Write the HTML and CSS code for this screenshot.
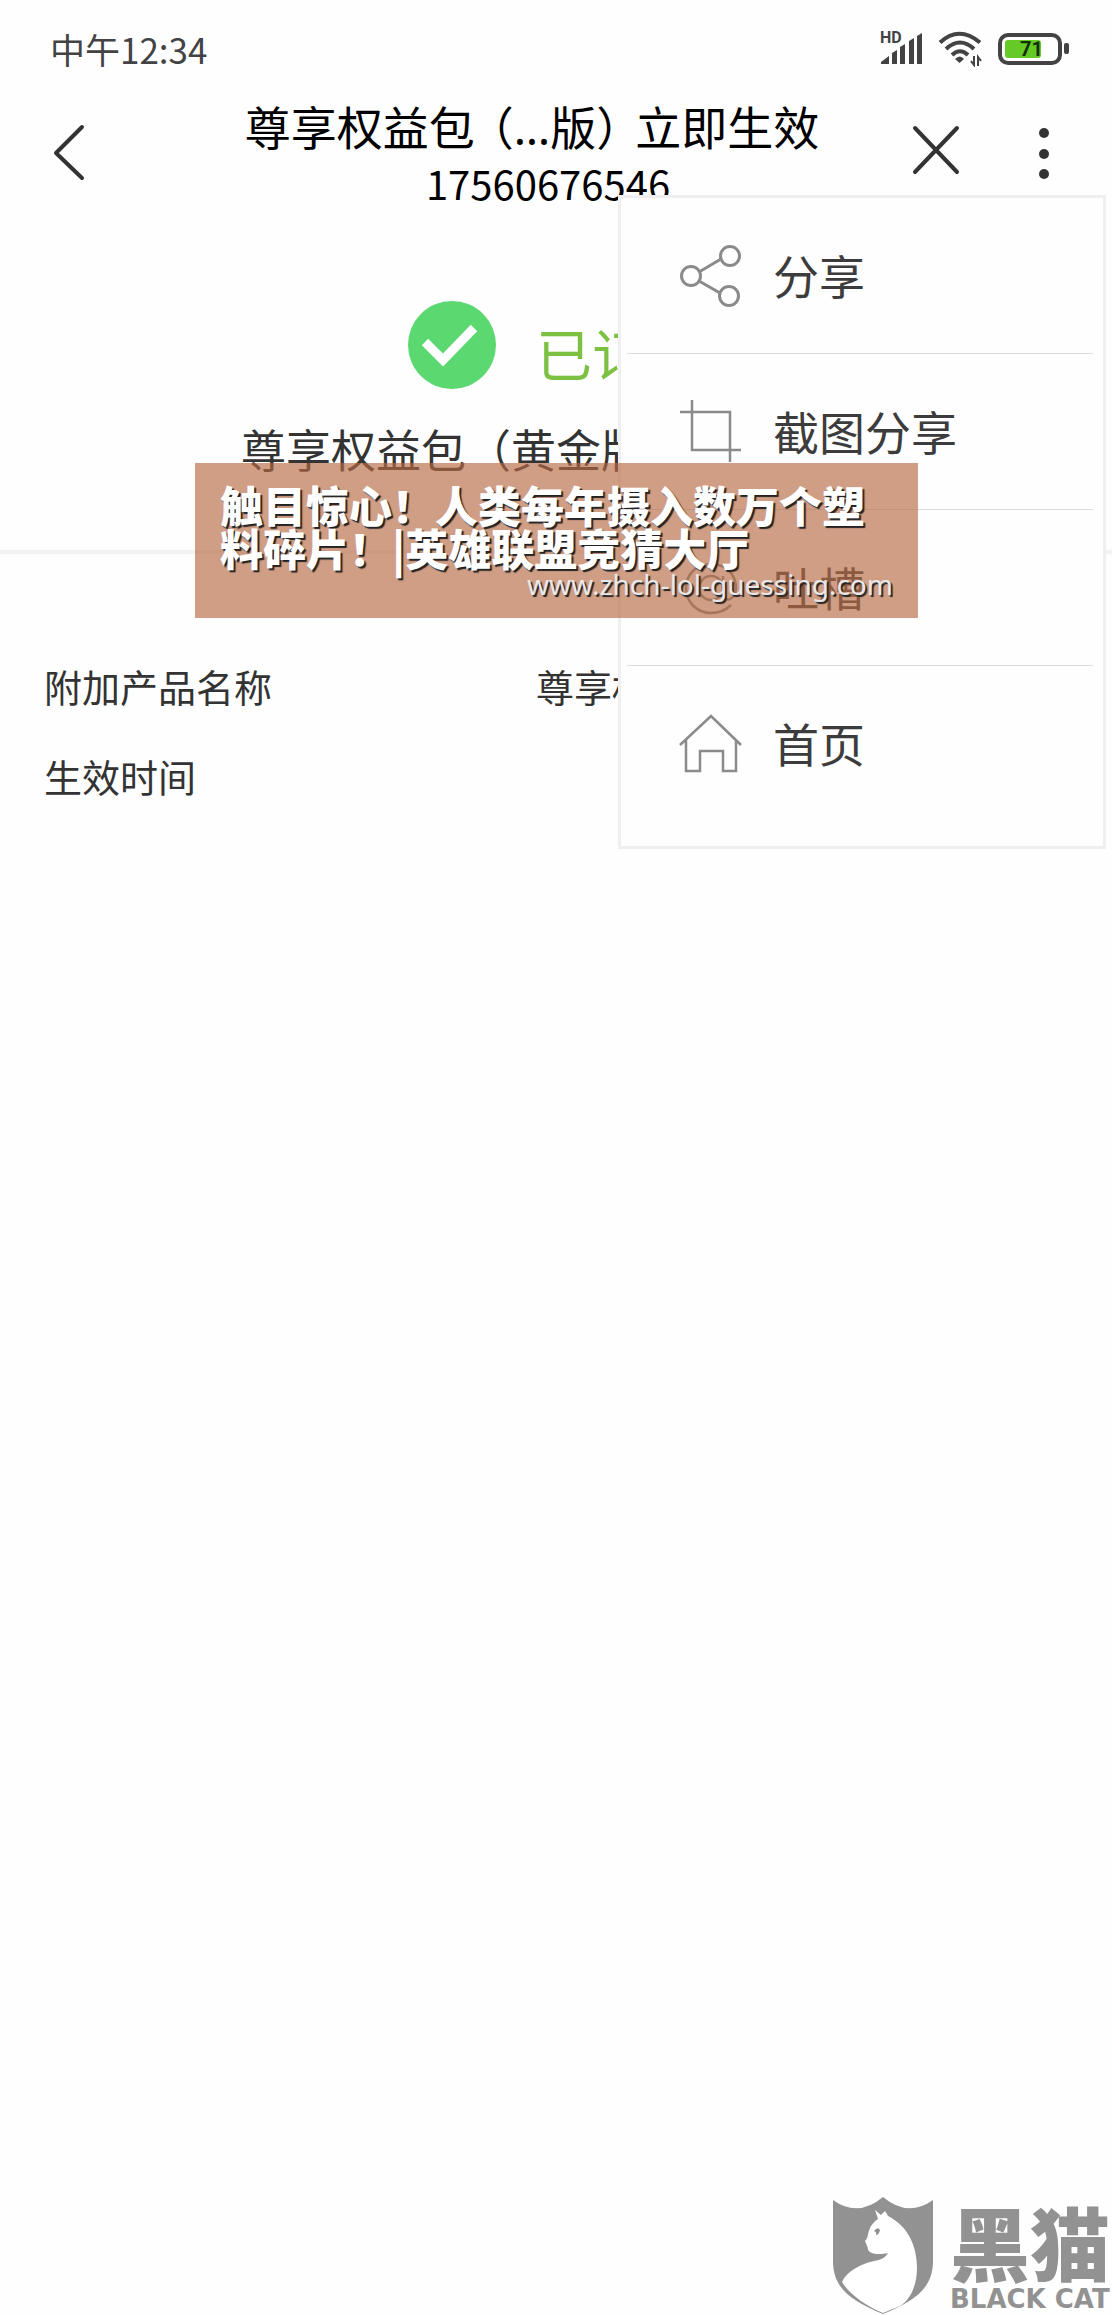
FILE: index.html
```html
<!DOCTYPE html>
<html lang="zh-CN">
<head>
  <meta charset="UTF-8">
  <meta name="viewport" content="width=device-width, initial-scale=1">
  <title>尊享权益包</title>
  <link rel="stylesheet" href="styles.css">
</head>
<body>
  <div class="status-bar">
    <span class="clock">中午12:34</span>
    <div class="status-icons">
      <div class="signal">
        <span class="hd">HD</span>
        <svg width="44" height="32" viewBox="0 0 44 32" fill="#434345">
          <path d="M1 31v-2l8-6v8zM12 31V20l5-3v14zM20 31V14l5-3v20zM29 31V8l5-3v26zM37 31V3l5-3v31z"/>
        </svg>
      </div>
      <svg width="46" height="36" viewBox="0 0 46 36" fill="none" stroke="#434345" stroke-width="4">
        <path d="M2 11.500Q21 -6 42 11.500M8 18Q22 5 36 18M14 24Q22 16.500 30 24"/>
        <path d="M17 28q5-5 9 0l-4.500 4z" fill="#434345" stroke="none"/>
        <path d="M36 25v9l-3-4M40 35v-9l3 4" stroke-width="2"/>
      </svg>
      <div class="battery">
        <svg width="74" height="32" viewBox="0 0 74 32">
          <rect x="2" y="2" width="60" height="28" rx="8" fill="#fff" stroke="#434345" stroke-width="4"/>
          <rect x="7" y="7" width="36" height="18" rx="3" fill="#65c926"/>
          <rect x="66" y="10" width="5" height="11" rx="2" fill="#434345"/>
        </svg>
        <span class="battery-level">71</span>
      </div>
    </div>
  </div>

  <header class="header">
    <button class="icon-btn" aria-label="返回">
      <svg width="64" height="64" viewBox="0 0 64 64" fill="none" stroke="#333" stroke-width="4" stroke-linecap="round" stroke-linejoin="round">
        <path d="M46 7L20 33l26 25"/>
      </svg>
    </button>
    <div class="titles">
      <h1>尊享权益包<span class="paren-open">（</span>…版<span class="paren-close">）</span>立即生效</h1>
      <p>17560676546</p>
    </div>
    <div class="header-actions">
      <button class="icon-btn" aria-label="关闭">
        <svg width="64" height="64" viewBox="0 0 64 64" fill="none" stroke="#333" stroke-width="4" stroke-linecap="round">
          <path d="M11 8l42 44M53 8L11 52"/>
        </svg>
      </button>
      <button class="icon-btn" aria-label="更多">
        <svg width="64" height="64" viewBox="0 0 64 64" fill="#333">
          <circle cx="32" cy="13" r="5"/>
          <circle cx="32" cy="34" r="5"/>
          <circle cx="32" cy="54" r="5"/>
        </svg>
      </button>
    </div>

    <nav class="menu">
      <button class="menu-item">
        <svg width="64" height="64" viewBox="0 0 64 64" fill="none" stroke="#8a8a8a" stroke-width="3">
          <circle cx="12" cy="32" r="9.500"/>
          <circle cx="51" cy="12" r="9.500"/>
          <circle cx="50" cy="52" r="9.500"/>
          <path d="M20 28l22-13M20 37l21 12"/>
        </svg>
        <span>分享</span>
      </button>
      <button class="menu-item">
        <svg width="64" height="64" viewBox="0 0 64 64" fill="none" stroke="#8a8a8a" stroke-width="2.500">
          <path d="M13 0v50h49M1 12h50v50"/>
        </svg>
        <span>截图分享</span>
      </button>
      <button class="menu-item">
        <svg width="64" height="64" viewBox="0 0 64 64" fill="none" stroke="#8a8a8a" stroke-width="2.500">
          <circle cx="32" cy="32" r="12"/>
          <path d="M44 20v18c0 9 13 7 13-6 0-14-11-24-25-24S7 18 7 32s11 25 25 25c8 0 15-3 20-8"/>
        </svg>
        <span>吐槽</span>
      </button>
      <button class="menu-item">
        <svg width="64" height="64" viewBox="0 0 64 64" fill="none" stroke="#8a8a8a" stroke-width="2.500">
          <path d="M1 33L32 4l30 29M7 28v31h14V39h23v20h13V28"/>
        </svg>
        <span>首页</span>
      </button>
    </nav>
  </header>

  <main>
    <section class="result">
      <div class="result-state">
        <svg width="88" height="88" viewBox="0 0 88 88">
          <circle cx="44" cy="44" r="44" fill="#5bd86f"/>
          <path d="M17 41l18 18 31-32" fill="none" stroke="#fff" stroke-width="9"/>
        </svg>
        <span>已订购</span>
      </div>
      <p class="result-name">尊享权益包（黄金版）立即生效</p>
      <aside class="banner">
        <p class="banner-text">触目惊心！人类每年摄入数万个塑料碎片！|英雄联盟竞猜大厅</p>
        <p class="banner-url">www.zhch-lol-guessing.com</p>
      </aside>
    </section>

    <dl class="details">
      <div class="row">
        <dt>附加产品名称</dt>
        <dd>尊享权益包（黄金版）立即生效</dd>
      </div>
      <div class="row">
        <dt>生效时间</dt>
        <dd></dd>
      </div>
    </dl>
  </main>

  <footer class="footer">
    <svg width="102" height="118" viewBox="0 0 102 118">
      <path d="M1 3q25 18 50-3 25 21 50 3v61c0 27-18 40-50 53C19 104 1 91 1 64z" fill="#929292"/>
      <path d="M43 13l6 5 4-4q2 3 3 5c20 10 29 30 29 52 0 18-7 32-17 38l-17 7C34 109 17 97 10 85c6-13 23-19 32-21 7-1 11-3 14-8-8 2-16 1-18-1-3-2-2-5-3-6l-2-5c4-4 2-8 6-15 2-3 4-5 7-7z" fill="#fff"/>
      <path d="M42 34q4-5 6-1-1 5-4 5 1-3-2-4z" fill="#929292"/>
    </svg>
    <div class="brand">
      <span class="brand-cn">黑猫</span>
      <span class="brand-en">BLACK CAT</span>
    </div>
  </footer>
</body>
</html>
```

FILE: styles.css
```css
* {
  box-sizing: border-box;
}

body {
  margin: 0;
  min-height: 100vh;
  display: flex;
  flex-direction: column;
  background: #fefefe;
  color: #333;
  font-family: "Noto Sans CJK SC", sans-serif;
}

h1, p, dl, dd {
  margin: 0;
}

button {
  padding: 0;
  border: none;
  background: none;
  color: inherit;
  font-family: inherit;
  cursor: pointer;
}

svg {
  display: block;
  flex-shrink: 0;
}

.status-bar {
  display: flex;
  justify-content: space-between;
  align-items: center;
  height: 97px;
  padding: 0 40px 0 50px;
}

.clock {
  font-size: 35px;
  line-height: 40px;
  color: #434345;
}

.status-icons {
  display: flex;
  align-items: center;
  gap: 14px;
}

.signal,
.battery {
  position: relative;
}

.hd {
  position: absolute;
  top: -3px;
  left: 0;
  font: bold 16px/16px "Roboto", sans-serif;
  color: #434345;
}

.battery-level {
  position: absolute;
  top: 6px;
  left: 22px;
  font: bold 20px/20px "Roboto", sans-serif;
  color: #143008;
}

/* header */
.header {
  position: relative;
  display: flex;
  justify-content: space-between;
  height: 124px;
  padding: 0 36px;
}

.icon-btn {
  height: 64px;
  margin-top: 23px;
}

.titles {
  padding-left: 92px;
  text-align: center;
  color: #000;
}

h1 {
  padding-right: 32px;
  font-family: "Noto Sans", "Noto Sans CJK SC", sans-serif;
  font-size: 46px;
  font-weight: 400;
  line-height: 60px;
}

.paren-open,
.paren-close {
  font-feature-settings: "halt";
}

.paren-open {
  margin-left: 16px;
}

.paren-close {
  margin-right: 16px;
}

.titles p {
  font-size: 40px;
  line-height: 52px;
}

.header-actions {
  display: flex;
  gap: 44px;
}

/* drop-down menu */
.menu {
  position: absolute;
  top: 98px;
  right: 6px;
  z-index: 2;
  width: 488px;
  padding: 0 10px 24px 6px;
  border: 3px solid #efefef;
  background: #fefefe;
}

.menu-item {
  display: flex;
  align-items: center;
  gap: 30px;
  width: 100%;
  height: 156px;
  padding-left: 52px;
  border-bottom: 1px solid #dcdcdc;
  font-size: 46px;
  color: #3c3c3c;
}

.menu-item span {
  padding-bottom: 4px;
}

.menu-item:last-child {
  border-bottom: none;
}

/* order result */
.result {
  position: relative;
  padding-top: 80px;
  height: 333px;
  border-bottom: 4px solid #f3f3f3;
}

.result-state {
  display: flex;
  justify-content: center;
  gap: 40px;
  font-size: 56px;
  line-height: 102px;
  color: #7cc142;
}

.result-name {
  font-size: 45px;
  line-height: 92px;
  text-align: center;
}

.banner {
  position: absolute;
  top: 242px;
  left: 195px;
  z-index: 3;
  width: 723px;
  height: 155px;
  padding: 20px 25px 0;
  background: rgba(181, 106, 68, 0.65);
  color: #fff;
  text-shadow: 2px 2px 1px #222;
}

.banner-text {
  font-size: 43px;
  font-weight: 900;
  line-height: 43px;
}

.banner-url {
  font: 28px/30px "Noto Sans", sans-serif;
  text-align: right;
  color: #e8e8ea;
}

.details {
  padding: 87px 44px;
  font-size: 38px;
  line-height: 90px;
}

.row {
  display: flex;
  justify-content: space-between;
}

/* brand mark */
.footer {
  display: flex;
  justify-content: flex-end;
  gap: 16px;
  margin-top: auto;
  padding-right: 2px;
  color: #929292;
}

.brand {
  display: flex;
  flex-direction: column;
}

.brand-cn {
  font-size: 80px;
  font-weight: 900;
  line-height: 86px;
}

.brand-en {
  font: bold 26px/32px "DejaVu Sans", sans-serif;
}
```
